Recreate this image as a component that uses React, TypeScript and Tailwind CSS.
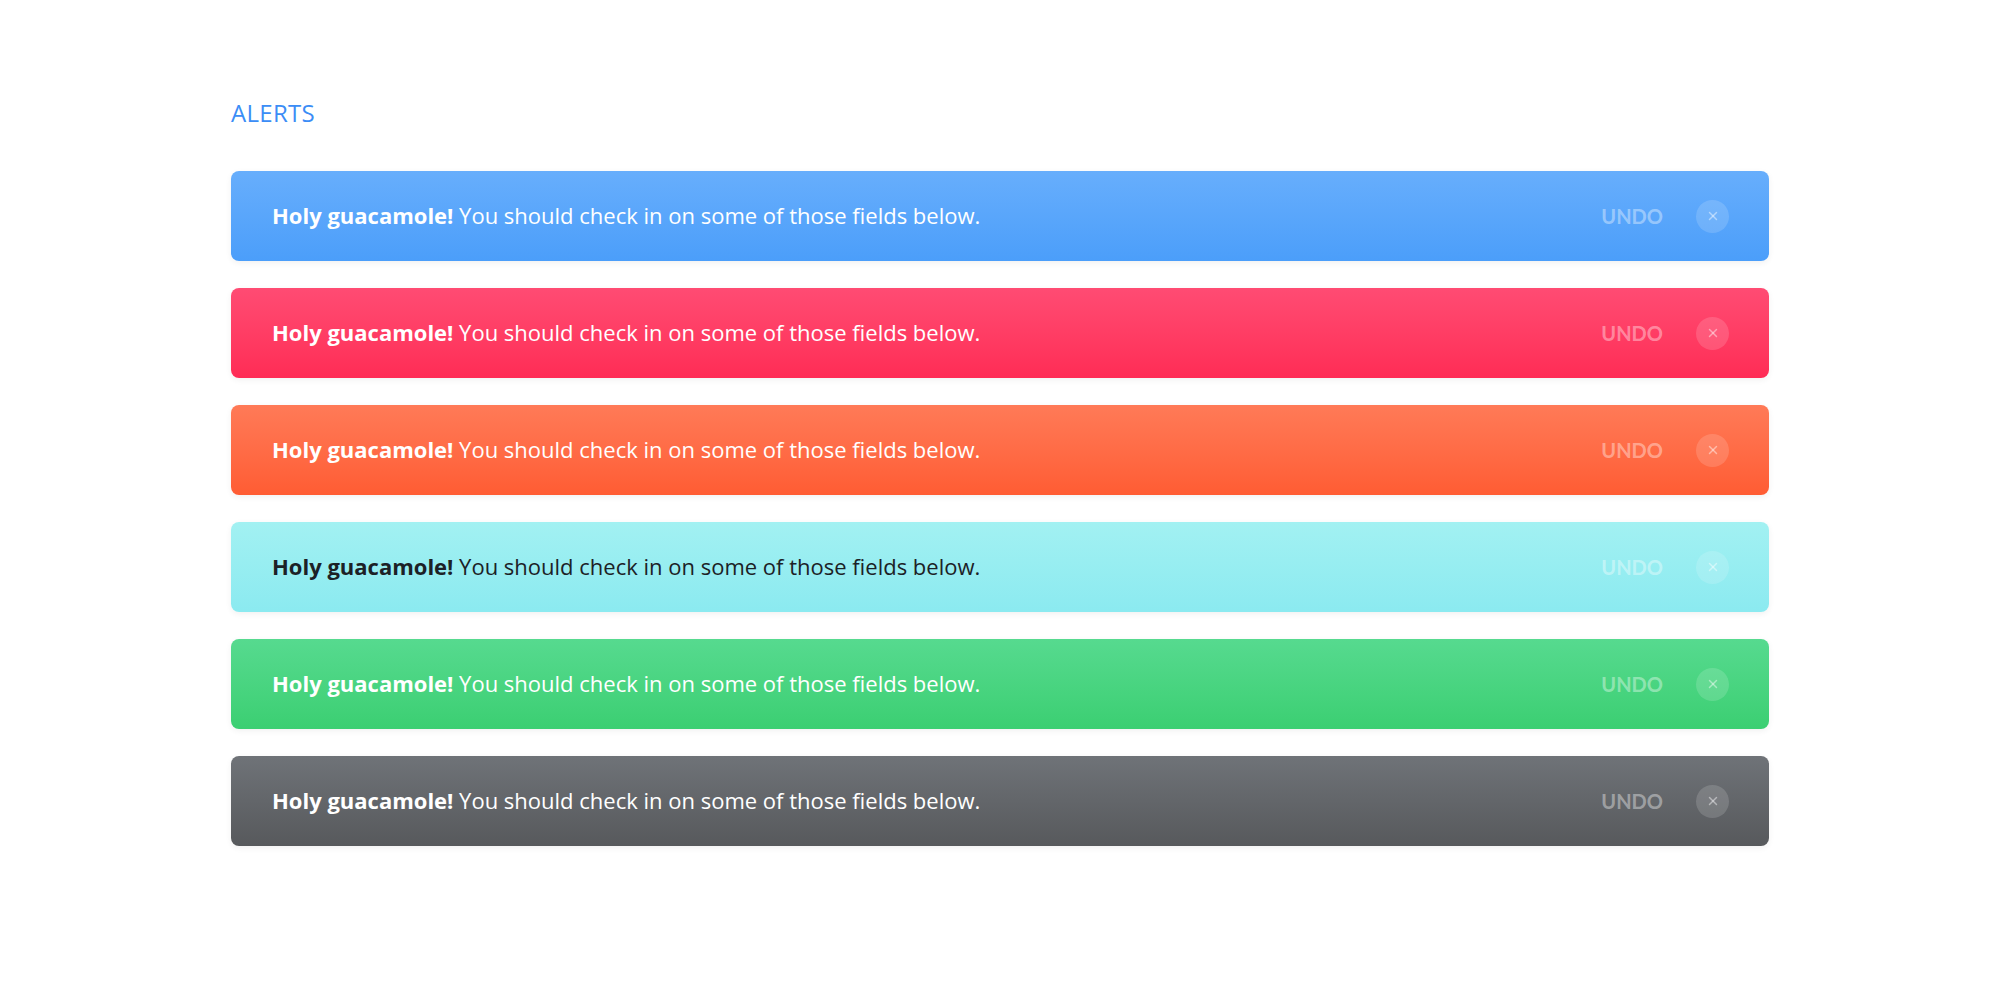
import { X } from 'lucide-react'

type Variant = {
    bg: string
    text: string
}

const variants: Variant[] = [
    { bg: 'bg-gradient-to-b from-[#67aefc] to-[#4b9efa]', text: 'text-white' },
    { bg: 'bg-gradient-to-b from-[#ff4b73] to-[#ff2b55]', text: 'text-white' },
    { bg: 'bg-gradient-to-b from-[#ff7a57] to-[#ff5c33]', text: 'text-white' },
    { bg: 'bg-gradient-to-b from-[#a2f1f2] to-[#8beaf0]', text: 'text-[#1c2126]' },
    { bg: 'bg-gradient-to-b from-[#56da8f] to-[#3bcf72]', text: 'text-white' },
    { bg: 'bg-gradient-to-b from-[#6f7378] to-[#57595c]', text: 'text-white' },
]

function Alert({ variant }: { variant: Variant }) {
    return (
        <div
            className={`flex h-[90px] items-center justify-between rounded-lg pl-[41px] pr-[40px] shadow-[0_2px_6px_rgba(0,0,0,0.06)] ${variant.bg}`}
        >
            <p className={`font-['Open_Sans',sans-serif] text-[22px] leading-[30px] -mt-[2px] ${variant.text}`}>
                <span className="font-bold">Holy guacamole!</span> You should check in on some of those fields below.
            </p>
            <div className="flex items-center gap-[33px]">
                <button className="text-[20px] font-bold uppercase text-white/40">Undo</button>
                <button className="flex h-[33px] w-[33px] items-center justify-center rounded-full bg-white/15 text-white/45">
                    <X className="h-[14px] w-[14px]" strokeWidth={2.5} />
                </button>
            </div>
        </div>
    )
}

export default function App() {
    return (
        <div className="min-h-screen bg-white font-['Lato','Open_Sans',sans-serif]">
            <div className="mx-auto w-[1538px] pt-[97px]">
                <h2 className="font-['Open_Sans',sans-serif] text-[24px] leading-[32px] tracking-[0.3px] text-[#3b8df6]">ALERTS</h2>
                <div className="mt-[42px] flex flex-col gap-[27px]">
                    {variants.map((v, i) => (
                        <Alert key={i} variant={v} />
                    ))}
                </div>
            </div>
        </div>
    )
}
